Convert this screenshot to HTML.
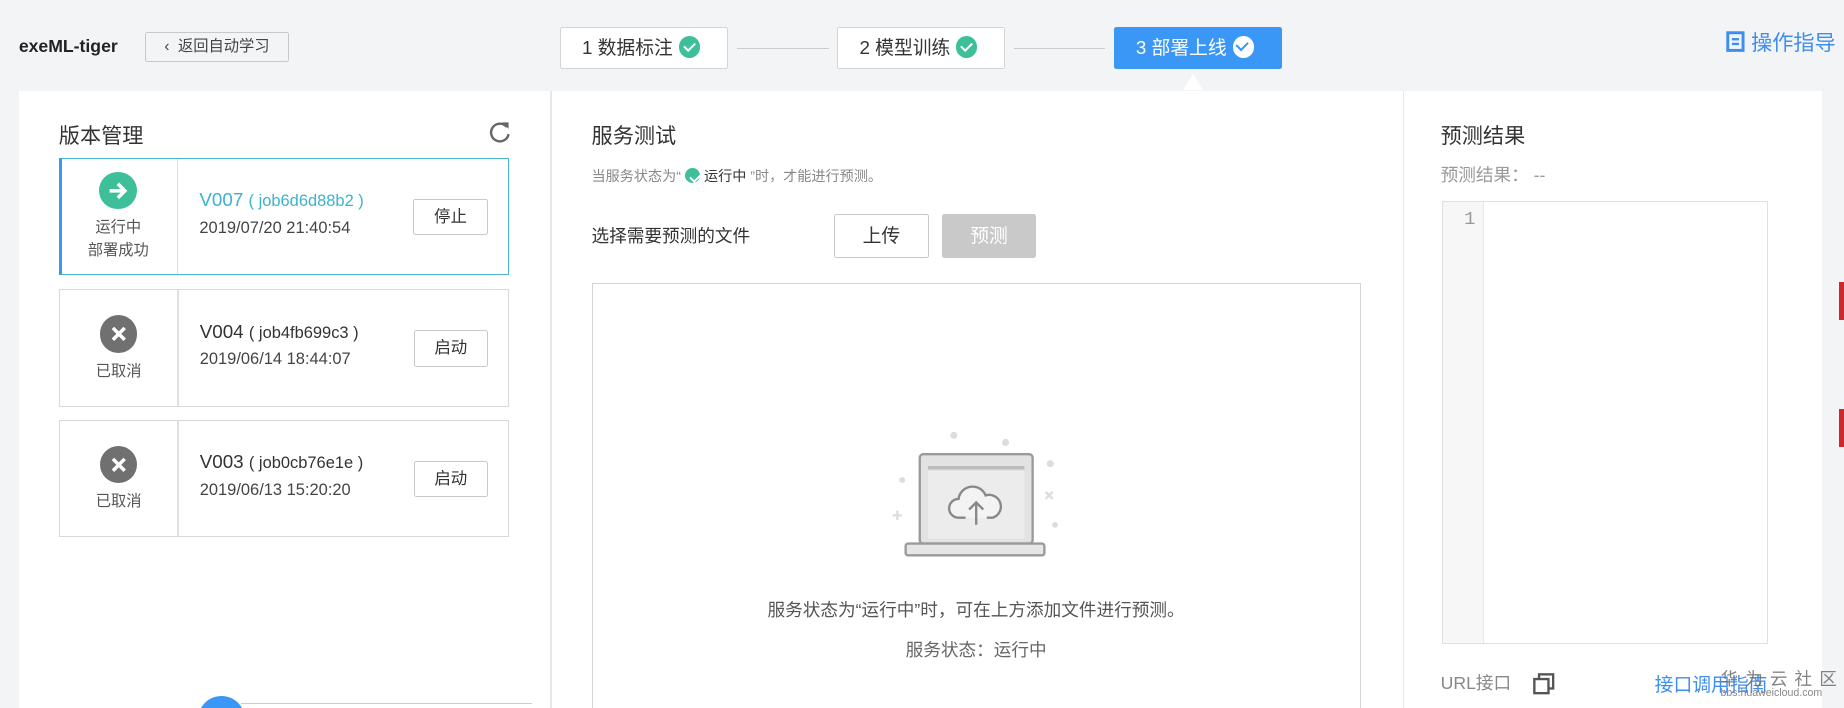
<!DOCTYPE html>
<html><head><meta charset="utf-8"><style>
html,body{margin:0;padding:0;overflow:hidden}
body{width:1568px;height:602px;background:#f3f4f6;position:relative;font-family:"Liberation Sans","Noto Sans CJK SC",sans-serif;color:#333;zoom:1.17602}
.a{position:absolute;white-space:nowrap}
.btn{position:absolute;border:1px solid #c8c8c8;background:#fff;box-sizing:border-box;text-align:center;font-size:14px;color:#333;border-radius:2px}
.step{position:absolute;top:23px;height:36px;width:143px;box-sizing:border-box;border:1px solid #d4d4d4;background:#fff;border-radius:2px;font-size:16px;line-height:34px;padding-left:18px;color:#333}
.chk{display:inline-block;width:18px;height:18px;border-radius:50%;background:#3dc09a;vertical-align:-3px;margin-left:5px;position:relative}
.chk:after{content:"";position:absolute;left:6px;top:3px;width:4px;height:8px;border:solid #fff;border-width:0 2px 2px 0;transform:rotate(45deg)}
.line{position:absolute;top:41px;height:1px;background:#ccc}
.card{position:absolute;left:50px;width:383px;height:100px;box-sizing:border-box;border:1px solid #d9d9d9;background:#fff}
.card .div{position:absolute;left:100px;top:0;bottom:0;width:1px;background:#e0e0e0}
.ic{position:absolute;left:34px;top:10px;width:32px;height:32px;border-radius:50%;background:#707070}
.st{position:absolute;left:0;width:100px;text-align:center;font-size:13px;color:#555;line-height:19px}
.v{position:absolute;left:119px;top:26px;font-size:16px;color:#333}
.v small{font-size:14px}
.d{position:absolute;left:119px;top:51px;font-size:14px;color:#444}
</style></head><body>
<div class="a" style="left:16px;top:31px;font-size:15px;font-weight:bold;color:#222">exeML-tiger</div>
<div class="btn" style="left:123px;top:27px;width:123px;height:26px;line-height:24px;font-size:13px;background:#f3f4f6;color:#444">‹&nbsp; 返回自动学习</div>

<div class="step" style="left:476px">1 数据标注<span class="chk"></span></div>
<div class="line" style="left:627px;width:78px"></div>
<div class="step" style="left:712px">2 模型训练<span class="chk"></span></div>
<div class="line" style="left:862px;width:78px"></div>
<div class="step" style="left:947px;background:#3a97f5;border-color:#3a97f5;color:#fff">3 部署上线<span class="chk" style="background:#fff"></span></div>
<style>.step:nth-of-type(0){}</style>
<div class="a" style="left:1053px;top:33px;width:5px;height:8px;border:solid #3a97f5;border-width:0 2px 2px 0;transform:rotate(45deg)"></div>

<div class="a" style="left:1468px;top:22px;font-size:18px;color:#3d8ef0"><svg width="16" height="18" style="vertical-align:-2px"><rect x="1.5" y="1.5" width="13" height="15" fill="none" stroke="#3d8ef0" stroke-width="2.5"/><rect x="5" y="6" width="6" height="2" fill="#3d8ef0"/><rect x="5" y="10" width="6" height="2" fill="#3d8ef0"/></svg> 操作指导</div>

<div class="a" style="left:16px;top:77px;width:1533px;height:525px;background:#fff"></div>
<div class="a" style="left:1006px;top:63px;width:0;height:0;border-left:9px solid transparent;border-right:9px solid transparent;border-bottom:14px solid #fff"></div>
<div class="a" style="left:468px;top:77px;width:1px;height:525px;background:#e8e8e8"></div>
<div class="a" style="left:1193px;top:77px;width:1px;height:525px;background:#e8e8e8"></div>
<div class="a" style="left:1564px;top:240px;width:4px;height:32px;background:#d0262d"></div>
<div class="a" style="left:1564px;top:348px;width:4px;height:32px;background:#d0262d"></div>

<div class="a" style="left:50px;top:101px;font-size:18px;color:#333">版本管理</div>
<svg class="a" style="left:415px;top:102px" width="20" height="20" viewBox="0 0 20 20"><path d="M16 6 A7.5 7.5 0 1 0 17.5 12" fill="none" stroke="#666" stroke-width="2"/><path d="M12 2 L17.5 2 L17.5 7.5 Z" fill="#666"/></svg>

<div class="card" style="top:134px;border-color:#4ab5cf;border-left:3px solid #3a97f5">
 <div class="div" style="left:98px"></div>
 <div class="ic" style="left:32px;top:11px;background:#3dc09a"><svg width="32" height="32"><path d="M9 16h13M16 10l6 6-6 6" fill="none" stroke="#fff" stroke-width="3"/></svg></div>
 <div class="st" style="left:-2px;top:50px">运行中<br>部署成功</div>
 <div class="v" style="left:117px;color:#3bb3cc">V007 <small>( job6d6d88b2 )</small></div>
 <div class="d" style="left:117px">2019/07/20 21:40:54</div>
 <div class="btn" style="left:299px;top:34px;width:63px;height:31px;line-height:29px">停止</div>
</div>
<div class="card" style="top:246px">
 <div class="div"></div>
 <div class="ic" style="left:34px;top:21px"><svg width="32" height="32"><path d="M11 11l10 10M21 11l-10 10" stroke="#fff" stroke-width="3"/></svg></div>
 <div class="st" style="top:60px">已取消</div>
 <div class="v">V004 <small>( job4fb699c3 )</small></div>
 <div class="d">2019/06/14 18:44:07</div>
 <div class="btn" style="left:301px;top:34px;width:63px;height:31px;line-height:29px">启动</div>
</div>
<div class="card" style="top:357px">
 <div class="div"></div>
 <div class="ic" style="left:34px;top:21px"><svg width="32" height="32"><path d="M11 11l10 10M21 11l-10 10" stroke="#fff" stroke-width="3"/></svg></div>
 <div class="st" style="top:60px">已取消</div>
 <div class="v">V003 <small>( job0cb76e1e )</small></div>
 <div class="d">2019/06/13 15:20:20</div>
 <div class="btn" style="left:301px;top:34px;width:63px;height:31px;line-height:29px">启动</div>
</div>
<div class="a" style="left:168px;top:592px;width:40px;height:40px;border-radius:50%;background:#3a97f5"></div>
<div class="a" style="left:205px;top:598px;width:247px;height:1px;background:#ccc"></div>

<div class="a" style="left:503px;top:101px;font-size:18px;color:#333">服务测试</div>
<div class="a" style="left:503px;top:141px;font-size:12px;color:#888">当服务状态为“ <span class="chk" style="width:13px;height:13px;margin:0;vertical-align:-2px"></span> <span style="color:#333">运行中</span> ”时，才能进行预测。</div>
<div class="a" style="left:503px;top:190px;font-size:15px;color:#333">选择需要预测的文件</div>
<div class="btn" style="left:709px;top:182px;width:81px;height:37px;line-height:35px;font-size:16px">上传</div>
<div class="btn" style="left:801px;top:182px;width:80px;height:37px;line-height:35px;font-size:16px;background:#c9c9c9;border-color:#c9c9c9;color:#fff">预测</div>
<div class="a" style="left:503px;top:241px;width:654px;height:370px;border:1px solid #d4d4d4;box-sizing:border-box"></div>
<svg class="a" style="left:755px;top:362px" width="150" height="115" viewBox="0 0 150 115">
 <g fill="#ddd"><circle cx="56" cy="8" r="3"/><circle cx="100" cy="14" r="3"/><circle cx="138" cy="32" r="3"/><circle cx="12" cy="46" r="2.5"/><circle cx="142" cy="84" r="2.5"/><path d="M4 76h8M8 72v8" stroke="#ddd" stroke-width="2"/><path d="M134 56l6 6M140 56l-6 6" stroke="#ddd" stroke-width="2"/></g>
 <rect x="27" y="24" width="96" height="76" rx="3" fill="#e2e2e2" stroke="#9a9a9a" stroke-width="2"/>
 <rect x="34" y="38" width="82" height="58" fill="#ececec"/><rect x="34" y="34" width="82" height="3" fill="#bbb"/>
 <rect x="15" y="100" width="118" height="10" rx="2" fill="#e6e6e6" stroke="#9a9a9a" stroke-width="2"/>
 <path d="M66 78h-6a8 8 0 0 1 0-16a12 12 0 0 1 23-3a8 8 0 0 1 6 19h-5" fill="#f3f3f3" stroke="#888" stroke-width="2"/>
 <path d="M75 84v-18M69 71l6-6 6 6" fill="none" stroke="#888" stroke-width="2"/>
</svg>
<div class="a" style="left:503px;top:508px;width:654px;text-align:center;font-size:15px;color:#555">服务状态为“运行中”时，可在上方添加文件进行预测。</div>
<div class="a" style="left:503px;top:542px;width:654px;text-align:center;font-size:15px;color:#666">服务状态：运行中</div>

<div class="a" style="left:1225px;top:101px;font-size:18px;color:#333">预测结果</div>
<div class="a" style="left:1225px;top:138px;font-size:15px;color:#999">预测结果： --</div>
<div class="a" style="left:1226px;top:171px;width:277px;height:377px;border:1px solid #e0e0e0;box-sizing:border-box"></div>
<div class="a" style="left:1227px;top:172px;width:34px;height:375px;background:#f7f7f7;border-right:1px solid #e6e6e6"></div>
<div class="a" style="left:1245px;top:177px;font-size:16px;color:#999;font-family:'Liberation Mono',monospace">1</div>
<div class="a" style="left:1225px;top:570px;font-size:15px;color:#888">URL接口</div>
<svg class="a" style="left:1303px;top:571px" width="20" height="20"><rect x="6" y="2" width="12" height="12" fill="none" stroke="#555" stroke-width="2"/><rect x="2" y="6" width="12" height="12" fill="#fff" stroke="#555" stroke-width="2"/></svg>
<div class="a" style="left:1407px;top:570px;font-size:16px;color:#3d8ef0">接口调用指南</div>
<div class="a" style="left:1463px;top:566px;font-size:15px;color:#666;letter-spacing:6px;opacity:.8">华为云社区</div>
<div class="a" style="left:1463px;top:584px;font-size:9px;color:#888">bbs.huaweicloud.com</div>
</body></html>
